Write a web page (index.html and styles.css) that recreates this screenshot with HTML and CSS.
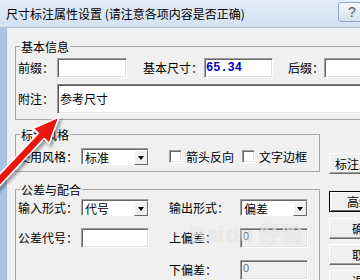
FILE: index.html
```html
<!DOCTYPE html>
<html lang="zh-CN">

<head>
    <meta charset="UTF-8">
    <title>尺寸标注属性设置</title>
    <link rel="stylesheet" href="styles.css">
</head>

<body>
    <div class="window">
        <div class="titlebar">
            <span class="title">尺寸标注属性设置 (请注意各项内容是否正确)</span>
            <span class="help">?</span>
        </div>
        <div class="client">
            <fieldset class="group group-basic">
                <legend>基本信息</legend>
                <div class="row row-top">
                    <span class="lbl w39">前缀：</span>
                    <span class="edit w70"></span>
                    <span class="lbl w61 ml16">基本尺寸：</span>
                    <span class="edit w69"><span class="value">65.34</span></span>
                    <span class="lbl w36 ml15">后缀：</span>
                    <span class="edit w80"></span>
                </div>
                <div class="row row-note">
                    <span class="lbl w39">附注：</span>
                    <span class="edit note"><span class="text">参考尺寸</span></span>
                </div>
            </fieldset>

            <div class="lower">
                <div class="left-col">
                    <fieldset class="group group-style">
                        <legend>标注风格</legend>
                        <div class="row row-style">
                            <span class="lbl w63">使用风格：</span>
                            <span class="combo"><span class="combo-text">标准</span><span class="combo-btn"><i></i></span></span>
                            <span class="check ml20"></span>
                            <span class="check-label">箭头反向</span>
                            <span class="check ml8"></span>
                            <span class="check-label">文字边框</span>
                        </div>
                    </fieldset>

                    <fieldset class="group group-tol">
                        <legend>公差与配合</legend>
                        <div class="tol-grid">
                            <span class="lbl">输入形式：</span>
                            <span class="combo"><span class="combo-text">代号</span><span class="combo-btn"><i></i></span></span>
                            <span class="lbl col4">输出形式：</span>
                            <span class="combo"><span class="combo-text">偏差</span><span class="combo-btn"><i></i></span></span>

                            <span class="lbl">公差代号：</span>
                            <span class="edit"></span>
                            <span class="lbl col4">上偏差：</span>
                            <span class="edit disabled"><span class="zero">0</span></span>

                            <span class="lbl col4">下偏差：</span>
                            <span class="edit disabled"><span class="zero">0</span></span>
                        </div>
                    </fieldset>
                </div>

                <div class="buttons">
                    <span class="btn btn-style">标注风格...</span>
                    <span class="btn btn-default">高级...</span>
                    <span class="btn btn-ok">确定</span>
                    <span class="btn btn-next">取消</span>
                    <span class="btn btn-next">退出</span>
                </div>
            </div>
        </div>

        <!-- red annotation arrow drawn over the dialog -->
        <svg class="arrow" width="360" height="280" viewBox="0 0 360 280">
            <defs>
                <linearGradient id="red" x1="0" y1="0" x2="1" y2="1">
                    <stop offset="0" stop-color="#ff3020" />
                    <stop offset="1" stop-color="#d40000" />
                </linearGradient>
                <filter id="shadow" x="-20%" y="-20%" width="140%" height="140%">
                    <feDropShadow dx="2" dy="3" stdDeviation="1.5" flood-color="#000" flood-opacity="0.35" />
                </filter>
            </defs>
            <polygon points="59,117 49.2,143.4 44.1,138.6 -7.3,193.2 -13.1,187.8 38.3,133.2 33.2,128.4"
                fill="url(#red)" stroke="#fff" stroke-width="1.5" stroke-linejoin="miter" filter="url(#shadow)" />
        </svg>

        <div class="watermark">Bai<span class="paw">du</span> 经验</div>
    </div>
</body>

</html>
```

FILE: styles.css
```css
body {
    margin: 0;
    width: 360px;
    height: 280px;
    overflow: hidden;
    font-family: "Noto Sans CJK SC", "Liberation Sans", sans-serif;
    font-size: 12px;
    color: #000;
}

.window {
    position: relative;
    width: 420px;
    height: 280px;
    display: flex;
    flex-direction: column;
    background: linear-gradient(90deg, #a9c4e2, #c6dbef);
}

.titlebar {
    height: 27px;
    flex: none;
    display: flex;
    align-items: center;
    padding-left: 6px;
    background: linear-gradient(#e2ecf7, #d3e2f2);
    position: relative;
}

.title {
    font-size: 12px;
    line-height: 16px;
    color: #000;
}

.help {
    position: absolute;
    left: 338px;
    top: 2px;
    width: 26px;
    height: 18px;
    border: 1px solid #8da5c0;
    border-radius: 3px;
    background: linear-gradient(#f5f8fc, #d6e2ef);
    color: #4d5c6c;
    font-family: "Liberation Sans", sans-serif;
    font-size: 14px;
    line-height: 18px;
    text-align: center;
}

.client {
    flex: 1;
    margin-left: 6px;
    background: #f0f0f0;
    border-top: 1px solid #a8bcd1;
    border-left: 1px solid #a8bcd1;
    padding: 10px 0 0 8px;
}

.group {
    margin: 0;
    border: 1px solid #a6a6a6;
    min-width: 0;
}

.group legend {
    margin-left: 2px;
    padding: 0 1px;
    font-size: 12px;
    line-height: 17px;
}

.group-basic {
    padding: 3px 4px 5px 2px;
}

.row {
    display: flex;
    align-items: center;
}

.row-top {
    height: 20px;
}

.row-note {
    height: 30px;
    margin-top: 6px;
}

.lbl {
    flex: none;
    white-space: nowrap;
    line-height: 16px;
}

.w39 { width: 39px; }
.w61 { width: 61px; }
.w36 { width: 36px; }
.w63 { width: 63px; }
.ml8 { margin-left: 8px; }
.ml15 { margin-left: 15px; }
.ml16 { margin-left: 16px; }
.ml20 { margin-left: 20px; }

.edit {
    box-sizing: border-box;
    display: flex;
    align-items: center;
    height: 20px;
    background: #fff;
    border: 1px solid;
    border-color: #a0a0a0 #fff #fff #a0a0a0;
    box-shadow: inset 1px 1px 0 #696969, inset -1px -1px 0 #e3e3e3;
    flex: none;
}

.w70 { width: 70px; }
.w69 { width: 69px; }
.w80 { width: 80px; }

.note {
    flex: 1;
    height: 30px;
    border-top-color: #7a7a7a;
    box-shadow: inset 1px 1px 0 #5a5a5a, inset -1px -1px 0 #e3e3e3;
}

.note .text {
    padding-left: 2px;
    line-height: 16px;
}

.value {
    padding-left: 1px;
    font-family: "Liberation Mono", monospace;
    font-weight: bold;
    font-size: 12px;
    color: #0000c8;
}

.lower {
    display: flex;
    gap: 9px;
    align-items: flex-start;
}

.left-col {
    width: 305px;
    flex: none;
}

.group-style {
    margin-top: 6px;
    padding: 5px 4px 6px 2px;
}

.row-style {
    height: 17px;
}

.combo {
    box-sizing: border-box;
    display: flex;
    width: 68px;
    height: 17px;
    background: #fff;
    border: 1px solid;
    border-color: #a0a0a0 #fff #fff #a0a0a0;
    box-shadow: inset 1px 1px 0 #696969;
    padding: 1px 0 0 1px;
    flex: none;
}

.combo-text {
    flex: 1;
    padding-left: 2px;
    line-height: 15px;
}

.combo-btn {
    box-sizing: border-box;
    width: 14px;
    height: 15px;
    display: flex;
    align-items: center;
    justify-content: center;
    background: #f0f0f0;
    border: 1px solid;
    border-color: #fff #696969 #696969 #fff;
}

.combo-btn i {
    width: 0;
    height: 0;
    border-left: 3.5px solid transparent;
    border-right: 3.5px solid transparent;
    border-top: 4px solid #000;
}

.check {
    box-sizing: border-box;
    width: 13px;
    height: 13px;
    flex: none;
    background: #fff;
    border: 1px solid;
    border-color: #a0a0a0 #fff #fff #a0a0a0;
    box-shadow: inset 1px 1px 0 #696969, inset -1px -1px 0 #e3e3e3;
}

.check-label {
    margin-left: 4px;
    line-height: 16px;
    white-space: nowrap;
}

.group-tol {
    margin-top: 9px;
    padding: 1px 4px 30px 2px;
}

.tol-grid {
    display: grid;
    grid-template-columns: 63px 68px 20px 71px 68px;
    grid-template-rows: 17px 20px 20px;
    row-gap: 12px;
    align-items: center;
}

.tol-grid .col4 {
    grid-column: 4;
}

.tol-grid .edit {
    width: 68px;
}

.edit.disabled {
    background: #f0f0f0;
    align-items: flex-start;
}

.zero {
    padding: 1px 0 0 2px;
    font-family: "Liberation Sans", sans-serif;
    font-size: 11px;
    line-height: 13px;
    color: #6d6d6d;
}

.buttons {
    width: 70px;
    flex: none;
    display: flex;
    flex-direction: column;
    padding-top: 33px;
}

.btn {
    box-sizing: border-box;
    height: 21px;
    display: flex;
    align-items: center;
    justify-content: center;
    background: #f0f0f0;
    border: 1px solid;
    border-color: #fff #696969 #696969 #fff;
    box-shadow: inset -1px -1px 0 #a0a0a0;
    line-height: 16px;
    white-space: nowrap;
}

.btn-default {
    margin-top: 17px;
    border-color: #000;
    box-shadow: inset 1px 1px 0 #fff, inset -1px -1px 0 #696969;
}

.btn-ok {
    margin-top: 6px;
}

.btn-next {
    margin-top: 5px;
}

.arrow {
    position: absolute;
    left: 0;
    top: 0;
    pointer-events: none;
}

.watermark {
    position: absolute;
    left: 190px;
    top: 222px;
    font-family: "Liberation Sans", sans-serif;
    font-weight: bold;
    font-size: 22px;
    line-height: 26px;
    color: rgba(255, 255, 255, 0.55);
    text-shadow: 0 0 1px rgba(150, 150, 150, 0.35);
    white-space: nowrap;
    pointer-events: none;
}

.paw {
    margin-left: 2px;
}
```
